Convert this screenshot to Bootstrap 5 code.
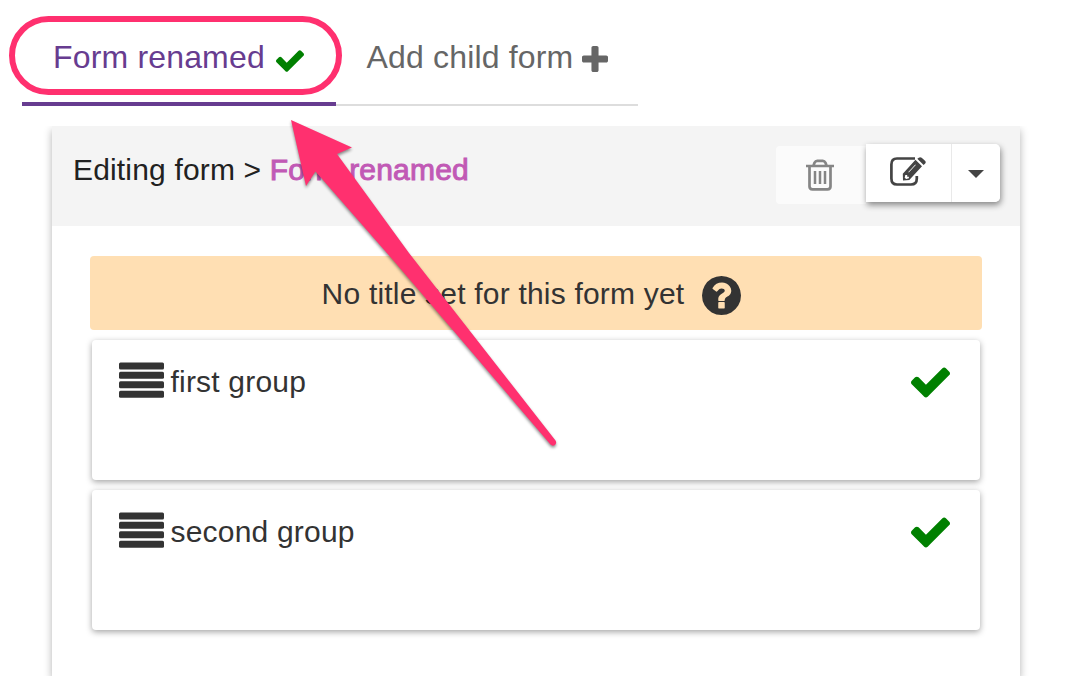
<!DOCTYPE html>
<html lang="en">
<head>
<meta charset="utf-8">
<meta name="viewport" content="width=device-width, initial-scale=1">
<title>Form editor</title>
<link href="https://cdn.jsdelivr.net/npm/bootstrap@5.3.0/dist/css/bootstrap.min.css" rel="stylesheet">
<style>
  body { font-family: "Liberation Sans", Arial, sans-serif; font-size: 30px; line-height: 40px; color: #333; letter-spacing: .2px; background: #fff; height: 676px; overflow: hidden; }
  svg { display: block; flex: none; }
  .form-tabs { width: 616px; height: 106px; margin-left: 22px; font-size: 32px; letter-spacing: .17px; }
  .form-tabs .nav-link { color: #666; padding: 10px 0 0; border-radius: 0; border-bottom: 2px solid #ddd; }
  .form-tabs .nav-link.active { color: #673c90; border-bottom: 4px solid #673c90; width: 314px; padding: 12px 0 0 31px; }
  .form-tabs .add-tab { width: 302px; padding-left: 30.500px; }
  .ok { color: green; }
  .editor { width: 968px; height: 550px; margin: 20px 0 0 52px; border: 0; border-radius: 0; box-shadow: 0 4px 8px rgba(0,0,0,.3); clip-path: inset(0 -20px 0); color: #333; }
  .editor .editor-head { height: 100px; background: #f4f4f4; border: 0; border-radius: 0; padding: 18px 20px 0 21px; color: #212121; }
  .head-title { margin-top: 6px; letter-spacing: .17px; }
  .form-name { color: #c159b5; letter-spacing: .2px; -webkit-text-stroke: 1px #c159b5; }
  .editor-body { height: 450px; padding: 30px 38px 0; }
  .btn-tool { height: 58px; padding: 0; border: 0; border-radius: 0; background: #fff; color: #444; display: flex; align-items: center; justify-content: center; }
  .btn-trash { width: 90px; margin-top: 2px; padding-right: 2px; background: #fbfbfb; color: #858585; border-radius: 4px 0 0 4px; }
  .split { height: 58px; border-radius: 0 5px 5px 0; box-shadow: 1px 3px 6px rgba(0,0,0,.45); }
  .btn-edit { width: 85px; padding: 0 1px 2px 0; }
  .btn-caret { width: 49px; padding: 0 1px 2px 0; border-left: 1px solid #e9e9e9; border-radius: 0 5px 5px 0; }
  .notice { height: 74px; background: #ffdfb3; border: 0; border-radius: 4px; padding: 2px 9px 0 0; margin: 0 0 10px; color: #333; }
  .group-card { height: 140px; margin: 0 2px 10px; border: 0; border-radius: 4px; box-shadow: 0 2px 6px rgba(0,0,0,.36); padding: 22px 30px 0 27px; color: #333; }
  .group-name { margin-left: 6.500px; }
  .marker-ring { left: 9px; top: 16px; width: 333px; height: 79px; border: 6px solid #ff306f; border-radius: 40px; }
  .marker-arrow { left: 280px; top: 110px; filter: drop-shadow(0 2px 1.5px rgba(0,0,0,.45)); }
</style>
</head>
<body class="position-relative">
<svg width="0" height="0" class="position-absolute" aria-hidden="true">
  <symbol id="check" viewBox="121 334 1550 1188"><path fill="currentColor" d="M1671 566q0 40-28 68l-724 724-136 136q-28 28-68 28t-68-28l-136-136-362-362q-28-28-28-68t28-68l136-136q28-28 68-28t68 28l294 295 656-657q28-28 68-28t68 28l136 136q28 28 28 68z"/></symbol>
  <symbol id="grip" viewBox="0 0 45 36"><g fill="currentColor"><rect width="45" height="7" y=".4" rx="1.5"/><rect width="45" height="7" y="9.8" rx="1.5"/><rect width="45" height="7" y="19.3" rx="1.5"/><rect width="45" height="7" y="28.8" rx="1.5"/></g></symbol>
</svg>

<nav class="nav form-tabs flex-nowrap">
  <a class="nav-link active d-flex align-items-center" href="#"><span>Form renamed</span><svg class="ok mt-2" style="margin-left:11px" width="28" height="22"><use href="#check"/></svg></a>
  <a class="nav-link add-tab d-flex align-items-center" href="#"><span>Add child form</span><svg class="mt-1" style="margin-left:9px" width="26" height="26" viewBox="192 128 1408 1408"><path fill="currentColor" d="M1600 736v192q0 40-28 68t-68 28h-416v416q0 40-28 68t-68 28h-192q-40 0-68-28t-28-68v-416h-416q-40 0-68-28t-28-68v-192q0-40 28-68t68-28h416v-416q0-40 28-68t68-28h192q40 0 68 28t28 68v416h416q40 0 68 28t28 68z"/></svg></a>
</nav>

<main class="card editor">
  <div class="card-header editor-head d-flex justify-content-between align-items-start">
    <div class="head-title">Editing form &gt; <span class="form-name">Form renamed</span></div>
    <div class="d-flex">
      <button class="btn btn-tool btn-trash" aria-label="Delete">
        <svg width="28" height="32" viewBox="0 0 28 32" fill="none" stroke="currentColor" stroke-width="2.700"><path d="M0 7h28M7.500 6.500 8.600 3.600Q9.500 1.800 11.200 1.800h5.600Q18.500 1.800 19.400 3.600L20.500 6.500M3.500 7v20.500Q3.500 30.300 6.500 30.300h15Q24.500 30.300 24.500 27.500V7"/><path stroke-width="2.500" d="M9 12v13M14 12v13M19 12v13"/></svg>
      </button>
      <div class="split d-flex">
        <button class="btn btn-tool btn-edit" aria-label="Edit">
          <svg width="36" height="30" viewBox="0 0 36 30"><path d="M25 1.500H7Q1.400 1.500 1.400 7.500V21.500Q1.400 27.500 7 27.500H21Q26.800 27.500 26.800 21.500V19" fill="none" stroke="currentColor" stroke-width="2.700"/><path fill="currentColor" fill-rule="evenodd" d="M25.500 2.800 32 9.200 19.300 22.900 13 23.600 12.800 16.800ZM15.300 17.900 14.700 20.700 16.200 22 18.900 21.300V19.700H17.200V17.900ZM18.800 15.400 25.800 8.100 25.300 7.600 18.300 14.900Z"/><path fill="currentColor" d="M27.300 1.800 28.800.7Q30.200-.4 31.700.8L35 3.800Q36.400 5.200 35.200 6.500L33.600 7.900Z"/></svg>
        </button>
        <button class="btn btn-tool btn-caret" aria-label="More actions"><svg class="mt-1" width="16" height="8" viewBox="0 0 16 8"><path fill="currentColor" d="M0 0h16L8 8z"/></svg></button>
      </div>
    </div>
  </div>
  <div class="card-body editor-body">
    <div class="alert notice d-flex align-items-center justify-content-center"><span>No title set for this form yet</span>
      <svg style="margin-left:18px;margin-top:3px" width="39" height="39" viewBox="128 128 1536 1536"><path fill="currentColor" d="M1024 1376v-192q0-14-9-23t-23-9h-192q-14 0-23 9t-9 23v192q0 14 9 23t23 9h192q14 0 23-9t9-23zm256-672q0-88-55.500-163t-138.500-116-170-41q-243 0-371 213-15 24 8 42l132 100q7 6 19 6 16 0 25-12 53-68 86-92 34-24 86-24 48 0 85.500 26t37.500 59q0 38-20 61t-68 45q-63 28-115.500 86.500t-52.500 125.500v60q0 14 9 23t23 9h192q14 0 23-9t9-23q0-43 21.500-73.500t54.500-49.500q32-18 49-28.500t46-35 44.500-48 28-60.500 12.500-81zm384 192q0 209-103 385.500t-279.500 279.500-385.500 103-385.500-103-279.500-279.500-103-385.500 103-385.500 279.500-279.500 385.500-103 385.500 103 279.500 279.500 103 385.500z"/></svg>
    </div>
    <div class="card group-card flex-row align-items-start"><svg width="45" height="36"><use href="#grip"/></svg><span class="group-name">first group</span><svg class="ok ms-auto" style="margin-top:5px" width="39" height="31"><use href="#check"/></svg></div>
    <div class="card group-card flex-row align-items-start"><svg width="45" height="36"><use href="#grip"/></svg><span class="group-name">second group</span><svg class="ok ms-auto" style="margin-top:5px" width="39" height="31"><use href="#check"/></svg></div>
  </div>
</main>

<!-- Annotation over the page -->
<div class="marker-ring position-absolute"></div>
<svg class="marker-arrow position-absolute" width="290" height="345" viewBox="280 110 290 345"><path fill="#ff306f" d="M291 120 352 147.500 337 154 409 253 555.500 440.500Q557 443 555 445 552.500 446.500 550.500 444.500L393 260 315.500 171.500 306 186Z"/></svg>
<script src="https://cdn.jsdelivr.net/npm/bootstrap@5.3.0/dist/js/bootstrap.bundle.min.js"></script>
</body>
</html>
